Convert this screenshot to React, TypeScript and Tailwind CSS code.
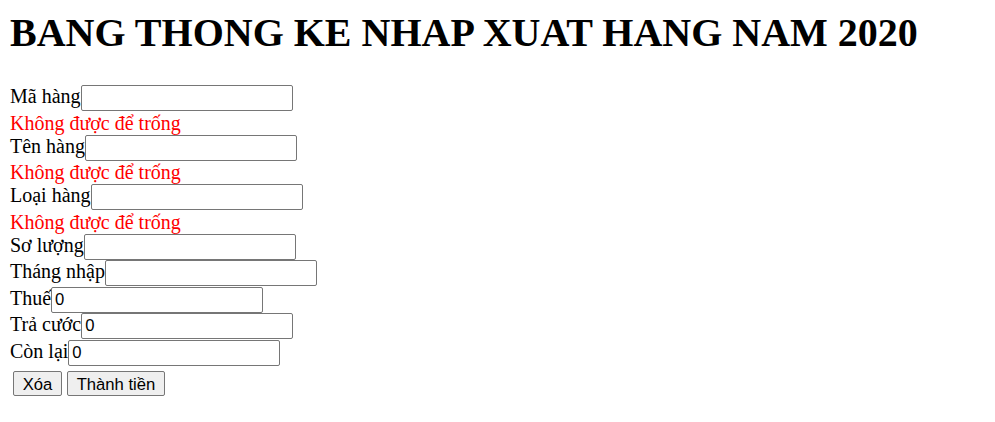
import React from "react";

const serif = { fontFamily: '"Liberation Serif", "Times New Roman", serif' };

function Row({ label, value }: { label: string; value?: string }) {
  return (
    <div className="flex items-baseline h-[26.5px] text-[20px] leading-[23px] text-black">
      <span>{label}</span>
      <input
        defaultValue={value ?? ""}
        className="w-[212px] h-[26px] border border-[#767676] rounded-[2px] px-[3px] bg-white text-[16.67px] text-black outline-none font-['Liberation_Sans',Arial,sans-serif]"
      />
    </div>
  );
}

function Err() {
  return <div className="h-[23px] text-[20px] leading-[23px] text-[#ff0000]">Không được để trống</div>;
}

export default function App() {
  return (
    <div className="min-h-[422px] w-[995px] bg-white px-[10px] pt-[10px]" style={serif}>
      <h1 className="m-0 text-[40px] leading-[46px] font-bold text-black mb-[29px]">
        BANG THONG KE NHAP XUAT HANG NAM 2020
      </h1>
      <form onSubmit={(e) => e.preventDefault()}>
        <Row label="Mã hàng" />
        <Err />
        <Row label="Tên hàng" />
        <Err />
        <Row label="Loại hàng" />
        <Err />
        <Row label="Sơ lượng" />
        <Row label="Tháng nhập" />
        <Row label="Thuế" value="0" />
        <Row label="Trả cước" value="0" />
        <Row label="Còn lại" value="0" />
        <div className="flex gap-[5px] ml-[3px] mt-[5px]">
          <button
            type="button"
            className="w-[49px] h-[25px] border border-[#767676] rounded-[2px] bg-[#efefef] text-[16.67px] text-black font-['Liberation_Sans',Arial,sans-serif]"
          >
            Xóa
          </button>
          <button
            type="button"
            className="w-[98px] h-[25px] border border-[#767676] rounded-[2px] bg-[#efefef] text-[16.67px] text-black font-['Liberation_Sans',Arial,sans-serif]"
          >
            Thành tiền
          </button>
        </div>
      </form>
    </div>
  );
}
